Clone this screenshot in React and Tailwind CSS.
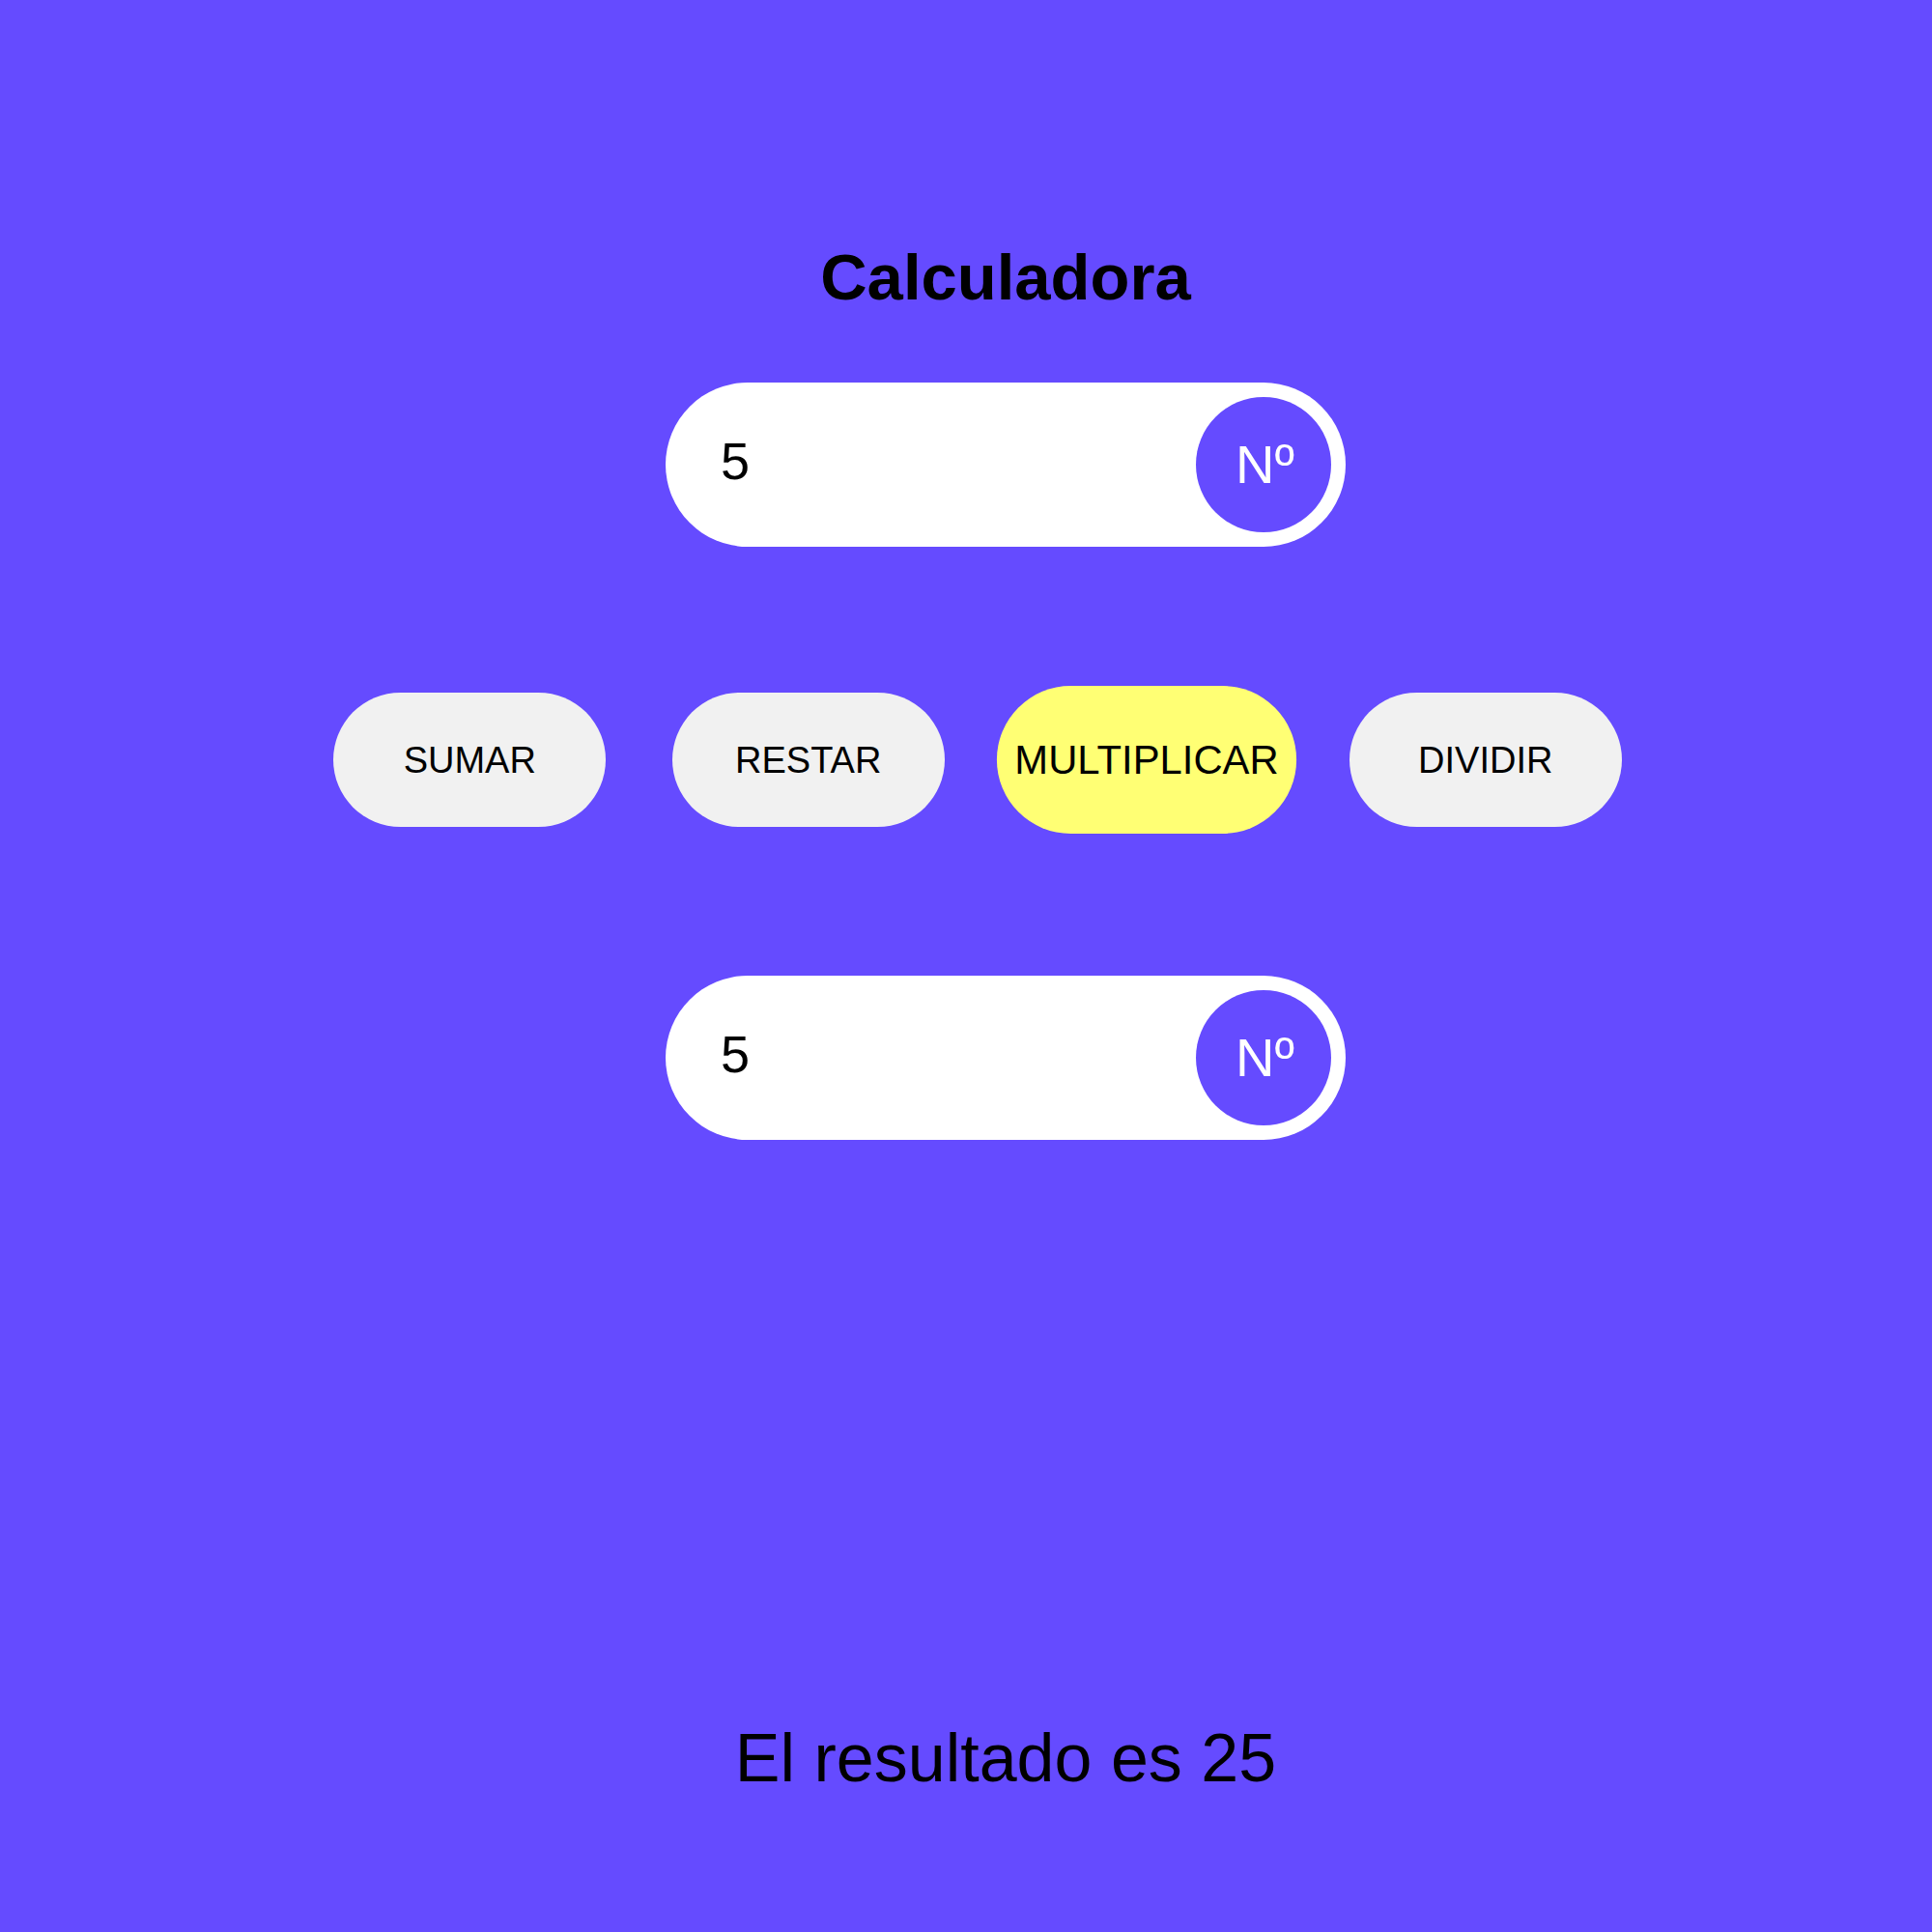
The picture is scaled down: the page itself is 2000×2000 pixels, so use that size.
import React from "react";

function NumberField() {
  return (
    <div className="flex h-[170px] w-[704px] items-center rounded-full bg-white">
      <input
        type="text"
        defaultValue="5"
        readOnly
        className="h-full min-w-0 flex-1 bg-transparent pb-[8px] pl-[57px] text-[54px] text-black outline-none"
        style={{ fontFamily: '"Liberation Sans", Arial, sans-serif' }}
      />
      <div className="mr-[15px] flex h-[140px] w-[140px] shrink-0 items-center justify-center rounded-full bg-[#654bff] pl-[3px] text-[56px] leading-none text-white">
        Nº
      </div>
    </div>
  );
}

function OpButton({ label, active }) {
  return (
    <button
      type="button"
      className={
        active
          ? "flex h-[139px] w-[282px] scale-110 items-center justify-center rounded-full bg-[#ffff74] text-[38px] leading-none text-black"
          : "flex h-[139px] w-[282px] items-center justify-center rounded-full bg-[#f1f1f1] text-[38px] leading-none text-black"
      }
    >
      {label}
    </button>
  );
}

export default function App() {
  return (
    <div
      className="min-h-[2000px] w-full bg-[#654bff]"
      style={{ fontFamily: '"Liberation Sans", Arial, sans-serif' }}
    >
      <div className="flex w-full flex-col items-center pl-[82px] pt-[253px]">
        <h1 className="text-[67px] font-bold leading-none text-black">Calculadora</h1>
        <div className="mt-[76px]">
          <NumberField />
        </div>
        <div className="mt-[151px] flex w-full justify-center gap-[68.5px] pr-[58px]">
          <OpButton label="SUMAR" />
          <OpButton label="RESTAR" />
          <OpButton label="MULTIPLICAR" active />
          <OpButton label="DIVIDIR" />
        </div>
        <div className="mt-[154px]">
          <NumberField />
        </div>
        <p className="mt-[605px] text-[70px] leading-none text-black">El resultado es 25</p>
      </div>
    </div>
  );
}
